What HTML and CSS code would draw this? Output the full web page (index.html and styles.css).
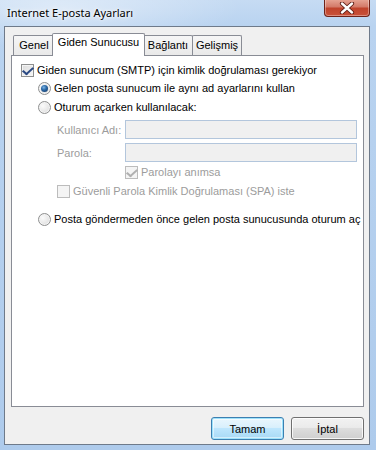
FILE: index.html
```html
<!DOCTYPE html>
<html lang="tr">
<head>
    <meta charset="UTF-8">
    <title>Internet E-posta Ayarları</title>
    <link rel="stylesheet" href="styles.css">
</head>
<body>
    <div class="window">
        <div class="titlebar">
            <span class="title">Internet E-posta Ayarları</span>
            <span class="close">
                <svg width="16" height="12" viewBox="0 0 16 12">
                    <path d="M3 1.5 L13 10.5 M13 1.5 L3 10.5" stroke="#5a1a12" stroke-width="4.2" stroke-linecap="round"/>
                    <path d="M3 1.5 L13 10.5 M13 1.5 L3 10.5" stroke="#ffffff" stroke-width="2.4" stroke-linecap="round"/>
                </svg>
            </span>
        </div>

        <div class="client">
            <div class="tabs">
                <div class="tab t-genel">Genel</div>
                <div class="tab active t-giden">Giden Sunucusu</div>
                <div class="tab t-baglanti">Bağlantı</div>
                <div class="tab t-gelismis">Gelişmiş</div>
            </div>

            <div class="panel">
                <div class="row auth">
                    <span class="check on"></span>
                    Giden sunucum (SMTP) için kimlik doğrulaması gerekiyor
                </div>
                <div class="row opt">
                    <span class="radio on"></span>
                    Gelen posta sunucum ile aynı ad ayarlarını kullan
                </div>
                <div class="row opt second">
                    <span class="radio"></span>
                    Oturum açarken kullanılacak:
                </div>

                <div class="field user">
                    <label>Kullanıcı Adı:</label>
                    <span class="textbox"></span>
                </div>
                <div class="field pass">
                    <label>Parola:</label>
                    <span class="textbox"></span>
                </div>

                <div class="row remember disabled">
                    <span class="check on"></span>
                    Parolayı anımsa
                </div>
                <div class="row spa disabled">
                    <span class="check"></span>
                    Güvenli Parola Kimlik Doğrulaması (SPA) iste
                </div>

                <div class="row opt last">
                    <span class="radio"></span>
                    Posta göndermeden önce gelen posta sunucusunda oturum aç
                </div>
            </div>

            <div class="footer">
                <button class="btn default">Tamam</button>
                <button class="btn">İptal</button>
            </div>
        </div>
    </div>
</body>
</html>
```

FILE: styles.css
```css
* {
    box-sizing: border-box;
}
body {
    margin: 0;
    font-family: "Liberation Sans", Arial, sans-serif;
    font-size: 11px;
    color: #000;
}
.window {
    width: 376px;
    height: 450px;
    padding: 26px 6px 5px 4px;
    display: flex;
    flex-direction: column;
    position: relative;
    background:
        radial-gradient(ellipse 180px 40px at 60px 8px, rgba(255,255,255,0.45), rgba(255,255,255,0) 100%),
        linear-gradient(180deg, #c6dbf3 0, #b9d3f0 26px, #aecbec 100%);
}
.titlebar {
    position: absolute;
    left: 0;
    top: 0;
    right: 0;
    height: 26px;
}
.title {
    position: absolute;
    left: 7px;
    top: 5px;
    font-family: "Noto Sans", sans-serif;
    font-size: 11px;
    color: #000;
    text-shadow: 0 0 6px #fff, 0 0 3px #fff;
}
/* caption close button */
.close {
    position: absolute;
    left: 324px;
    top: -1px;
    width: 46px;
    height: 18px;
    border: 1px solid #6e2219;
    border-top: none;
    border-radius: 0 0 4px 4px;
    background: linear-gradient(180deg, #e8a898 0, #d47b6a 45%, #c0432c 55%, #c9523a 100%);
    box-shadow: inset 0 0 0 1px rgba(255,255,255,0.35);
    display: flex;
    align-items: center;
    justify-content: center;
}
.client {
    flex: 1;
    background-color: #f0f0f0;
    border: 1px solid #6e7a8a;
    padding: 6px 5px 0 6px;
    display: flex;
    flex-direction: column;
}
.tabs {
    display: flex;
    height: 22px;
    padding-left: 2px;
    align-items: flex-end;
    position: relative;
    z-index: 2;
}
.tab {
    height: 20px;
    padding-top: 3px;
    margin-right: -1px;
    text-align: center;
    white-space: nowrap;
    border: 1px solid #898c95;
    border-bottom: none;
    border-radius: 2px 2px 0 0;
    background: linear-gradient(180deg, #f6f6f6 0, #e9e9e9 100%);
}
.t-genel { width: 42px; }
.t-giden { width: 93px; }
.t-baglanti { width: 50px; }
.t-gelismis { width: 50px; }
.tab.active {
    height: 23px;
    margin: 0 -2px -1px -2px;
    padding-top: 2px;
    background: #fff;
    position: relative;
    z-index: 1;
}
.panel {
    height: 352px;
    background: #fff;
    border: 1px solid #898c95;
    padding: 5px 0 0 9px;
    display: flex;
    flex-direction: column;
}
.row {
    height: 18px;
    display: flex;
    align-items: center;
    white-space: nowrap;
}
.row.opt {
    margin-left: 17px;
}
.row.second {
    margin-top: 1px;
}
.row.remember {
    margin-left: 104px;
    margin-top: 1px;
}
.row.spa {
    margin-left: 36px;
    margin-top: 1px;
}
.row.last {
    margin-top: 10px;
}
.disabled {
    color: #9c9c9c;
}
.field {
    display: flex;
    align-items: center;
    height: 19px;
    margin-left: 36px;
    color: #9c9c9c;
}
.field.user {
    margin-top: 4px;
}
.field.pass {
    margin-top: 4px;
}
.field label {
    width: 68px;
}
.textbox {
    width: 232px;
    height: 19px;
    border: 1px solid #b3c6dc;
    background: #f0f0f0;
}
/* checkbox and radio glyphs */
.check, .radio {
    width: 13px;
    height: 13px;
    margin-right: 3px;
    flex: none;
    position: relative;
    border: 1px solid #8e8f8f;
    background: linear-gradient(135deg, #dcdcdc 0, #f6f6f6 100%);
    box-shadow: inset 0 0 0 1px #f4f4f4;
}
.check.on::after {
    content: "";
    position: absolute;
    left: 3px;
    top: 0px;
    width: 4px;
    height: 8px;
    border: solid #2b4a84;
    border-width: 0 2px 2px 0;
    transform: rotate(40deg) skewX(-8deg);
}
.disabled .check {
    border-color: #bcbcbc;
    background: #f4f4f4;
}
.disabled .check.on::after {
    border-color: #b0b0b0;
}
.radio {
    border-radius: 50%;
    background: radial-gradient(circle at 35% 35%, #fbfbfb 0, #e2e2e2 70%, #cfcfcf 100%);
}
.radio.on::after {
    content: "";
    position: absolute;
    left: 2px;
    top: 2px;
    width: 7px;
    height: 7px;
    border-radius: 50%;
    background: radial-gradient(circle at 40% 35%, #7fb6e6 0, #2c6aa8 40%, #0f2f5a 100%);
}
.footer {
    display: flex;
    justify-content: flex-end;
    gap: 7px;
    margin-top: 10px;
}
.btn {
    width: 73px;
    height: 23px;
    font-family: inherit;
    font-size: 11px;
    color: #000;
    border: 1px solid #707070;
    border-radius: 3px;
    background: linear-gradient(180deg, #f2f2f2 0, #ebebeb 45%, #dddddd 50%, #cfcfcf 100%);
    box-shadow: inset 0 0 0 1px rgba(255,255,255,0.8);
    padding: 0;
}
.btn.default {
    border-color: #3c7fb1;
    background: linear-gradient(180deg, #eaf6fd 0, #d9f0fc 45%, #bee6fd 50%, #a7d9f5 100%);
    box-shadow: inset 0 0 0 1px #9ee2fb, inset 0 0 0 2px rgba(255,255,255,0.5);
}
```
